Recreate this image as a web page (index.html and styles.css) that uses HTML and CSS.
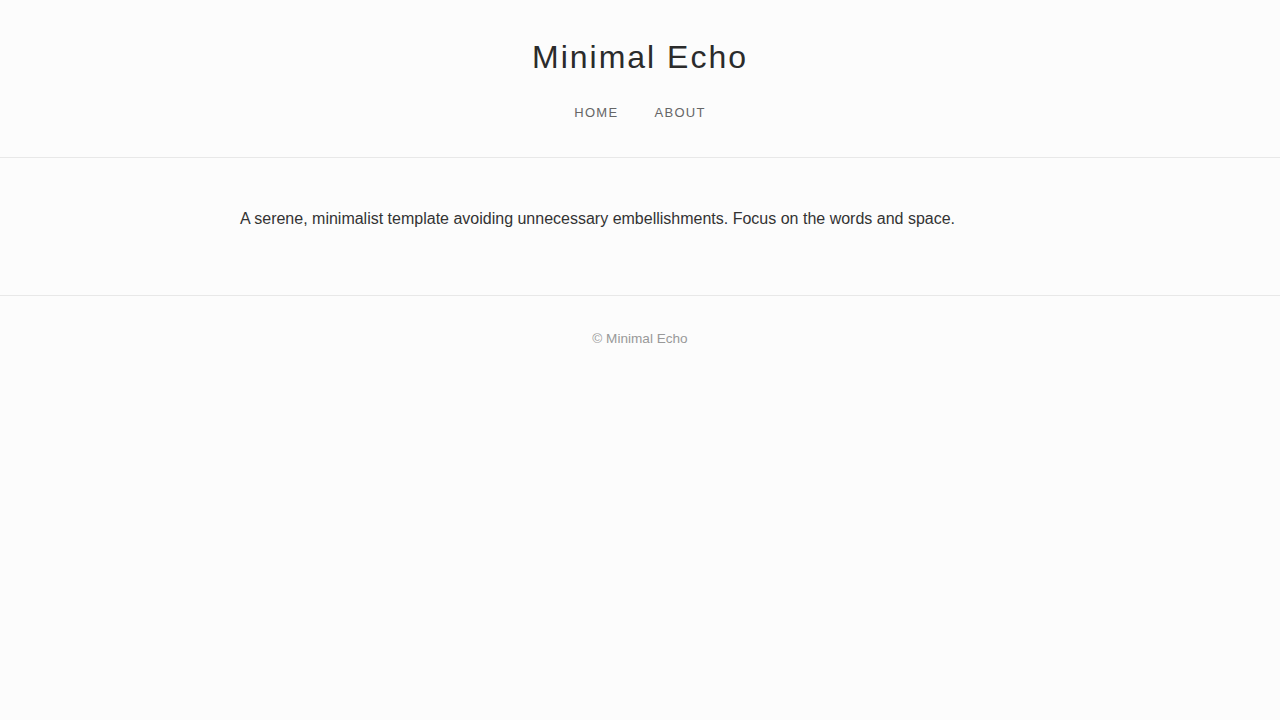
FILE: index.html
```html
<!DOCTYPE html>
<html lang="en">
<head>
<meta charset="utf-8">
<title>Minimal Echo</title>
<link rel="stylesheet" href="styles.css">
</head>
<body>
<header class="site-header">
  <h1 class="site-title">Minimal Echo</h1>
  <nav class="site-nav">
    <a href="#" class="nav-link">Home</a>
    <a href="#" class="nav-link">About</a>
  </nav>
</header>
<main class="site-main">
  <div class="container">
    <p class="intro">A serene, minimalist template avoiding unnecessary embellishments. Focus on the words and space.</p>
  </div>
</main>
<footer class="site-footer">
  <p class="copy">© Minimal Echo</p>
</footer>
</body>
</html>
```

FILE: styles.css
```css
* { box-sizing: border-box; }
html, body {
  margin: 0;
  padding: 0;
  background: #fcfcfc;
  color: #333;
  font-family: "Liberation Sans", Arial, sans-serif;
}
.site-header {
  padding: 38px 0 36px;
  text-align: center;
  border-bottom: 1px solid #e8e8e8;
}
.site-title {
  margin: 0;
  font-size: 32px;
  line-height: 38px;
  font-weight: 400;
  letter-spacing: 2px;
  color: #2b2b2b;
}
.site-nav {
  margin-top: 29px;
  display: flex;
  justify-content: center;
  gap: 36px;
}
.nav-link {
  font-size: 13px;
  line-height: 16px;
  text-transform: uppercase;
  letter-spacing: 1.3px;
  color: #666;
  text-decoration: none;
}
.site-main {
  padding: 48px 0;
  border-bottom: 1px solid #e8e8e8;
}
.container {
  width: 800px;
  margin: 0 auto;
}
.intro {
  margin: 0 0 15px;
  font-size: 16px;
  line-height: 1.6;
  color: #333;
}
.site-footer {
  padding: 32px 0;
  text-align: center;
}
.copy {
  margin: 0;
  font-size: 13.6px;
  line-height: 1.6;
  color: #999;
}
```
